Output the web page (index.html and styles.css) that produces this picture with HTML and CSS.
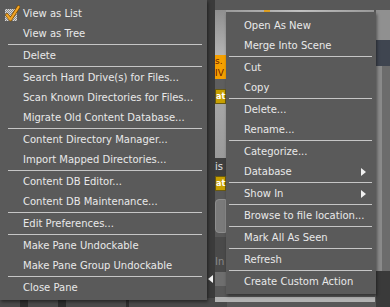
FILE: index.html
```html
<!DOCTYPE html>
<html lang="en">
<head>
  <meta charset="UTF-8" />
  <title>Content Library Menus</title>
  <link rel="stylesheet" href="styles.css">
</head>
<body>
  <div class="screen">
    <!-- background panes behind the popups -->
    <div class="bg-divider"></div>
    <div class="bg-column">
      <div class="col-light"></div>
      <div class="col-orange"><span>s.</span><span>IV</span></div>
      <div class="col-dark"></div>
      <div class="col-badge">at</div>
      <div class="col-grey"></div>
      <div class="col-label">is</div>
      <div class="col-badge">at</div>
      <div class="col-knob"></div>
      <div class="col-lower">In</div>
      <div class="col-grey2"></div>
    </div>
    <div class="bg-topstrip"><span class="dot"></span></div>
    <div class="bg-right">
      <div class="r-top"></div>
      <div class="r-blue"></div>
      <div class="r-mid"></div>
      <div class="r-dark"></div>
    </div>
    <div class="bg-bottom-left">
      <span class="bar"></span><span class="bar"></span><span class="bar thin"></span>
    </div>
    <div class="bg-bottom-right"></div>
    <span class="pane-arrow"></span>

    <ul class="menu menu-left">
      <li class="item checked">
        <svg class="check" width="16" height="18" viewBox="0 0 16 18">
          <defs>
            <pattern id="hatch" width="2" height="2" patternUnits="userSpaceOnUse">
              <rect width="2" height="2" fill="#8a8a8a"/>
              <rect width="1" height="1" fill="#d8d8d8"/>
              <rect x="1" y="1" width="1" height="1" fill="#d8d8d8"/>
            </pattern>
          </defs>
          <rect x="1" y="4" width="12" height="12" fill="url(#hatch)"/>
          <path d="M3 10 L6.5 14.5 L14.5 2" fill="none" stroke="#7a4a00" stroke-width="3.6" stroke-linecap="round" stroke-linejoin="round"/>
          <path d="M3 10 L6.5 14.5 L14.5 2" fill="none" stroke="#f2a526" stroke-width="2.2" stroke-linecap="round" stroke-linejoin="round"/>
        </svg>
        View as List
      </li>
      <li class="item">View as Tree</li>
      <li class="sep"></li>
      <li class="item">Delete</li>
      <li class="sep"></li>
      <li class="item">Search Hard Drive(s) for Files...</li>
      <li class="item">Scan Known Directories for Files...</li>
      <li class="item">Migrate Old Content Database...</li>
      <li class="sep"></li>
      <li class="item">Content Directory Manager...</li>
      <li class="item">Import Mapped Directories...</li>
      <li class="sep"></li>
      <li class="item">Content DB Editor...</li>
      <li class="item">Content DB Maintenance...</li>
      <li class="sep"></li>
      <li class="item">Edit Preferences...</li>
      <li class="sep"></li>
      <li class="item">Make Pane Undockable</li>
      <li class="item">Make Pane Group Undockable</li>
      <li class="sep"></li>
      <li class="item">Close Pane</li>
    </ul>

    <ul class="menu menu-right">
      <li class="item">Open As New</li>
      <li class="item">Merge Into Scene</li>
      <li class="sep"></li>
      <li class="item">Cut</li>
      <li class="item">Copy</li>
      <li class="sep"></li>
      <li class="item">Delete...</li>
      <li class="item">Rename...</li>
      <li class="sep"></li>
      <li class="item">Categorize...</li>
      <li class="item sub">Database</li>
      <li class="sep"></li>
      <li class="item sub">Show In</li>
      <li class="sep"></li>
      <li class="item">Browse to file location...</li>
      <li class="sep"></li>
      <li class="item">Mark All As Seen</li>
      <li class="sep"></li>
      <li class="item">Refresh</li>
      <li class="sep"></li>
      <li class="item">Create Custom Action</li>
    </ul>
  </div>
</body>
</html>
```

FILE: styles.css
```css
body {
  margin: 0;
  padding: 0;
  background-color: #4f4f4f;
  font-family: 'DejaVu Sans', sans-serif;
}
.screen {
  position: relative;
  width: 390px;
  height: 307px;
  overflow: hidden;
  background-color: #585858;
}

/* background panes */
.bg-divider {
  position: absolute;
  left: 207px;
  top: 0;
  width: 8px;
  height: 307px;
  background-color: #3b3b3b;
}
.bg-column {
  position: absolute;
  left: 215px;
  top: 10px;
  width: 11px;
  height: 297px;
  display: flex;
  flex-direction: column;
  font-size: 9px;
  overflow: hidden;
}
.col-light {
  height: 45px;
  background: linear-gradient(#8f8f8f, #b4b4b4);
}
.col-orange {
  height: 24px;
  background-color: #f5a000;
  color: #6a1a00;
  display: flex;
  flex-direction: column;
  line-height: 12px;
  font-size: 9px;
}
.col-dark {
  height: 10px;
  background-color: #5e5e5e;
}
.col-badge {
  height: 15px;
  background-color: #c8a000;
  border: 1px solid #6a5a10;
  box-sizing: border-box;
  color: #fff;
  font-weight: bold;
  line-height: 13px;
  font-size: 8px;
}
.col-grey {
  height: 54px;
  background: linear-gradient(#a6a6a6, #9a9a9a);
}
.col-label {
  height: 18px;
  background-color: #3f3f3f;
  color: #e0e0e0;
  line-height: 18px;
  font-size: 10px;
}
.col-knob {
  height: 32px;
  margin-top: 8px;
  background-color: #7a7a7a;
  border-radius: 4px 0 0 4px;
  border: 1px solid #8e8e8e;
}
.col-lower {
  height: 35px;
  margin-top: 4px;
  background-color: #4a4a4a;
  color: #8a8a8a;
  font-size: 10px;
  line-height: 50px;
}
.col-grey2 {
  height: 14px;
  background-color: #6e6e6e;
}
.bg-topstrip {
  position: absolute;
  left: 226px;
  top: 10px;
  width: 148px;
  height: 3px;
  background: linear-gradient(90deg, #9c9c9c, #c4c4c4 50%, #9a9a9a);
}
.bg-topstrip .dot {
  position: absolute;
  left: 38px;
  top: 0;
  width: 6px;
  height: 3px;
  background-color: #e0a020;
}
.bg-right {
  position: absolute;
  left: 376px;
  top: 10px;
  width: 14px;
  height: 297px;
  display: flex;
  flex-direction: column;
  background-color: #6a6a6a;
}
.r-top {
  height: 30px;
  background-color: #909090;
}
.r-blue {
  height: 26px;
  background-color: #3f4550;
}
.r-mid {
  height: 205px;
  background: linear-gradient(90deg, #8a8a8a 40%, #6c6c6c 40%);
}
.r-dark {
  flex: 1;
  background-color: #3a3a3a;
}
.bg-bottom-left {
  position: absolute;
  left: 0;
  top: 298px;
  width: 207px;
  height: 9px;
  background-color: #4a4a4a;
  display: flex;
  gap: 30px;
  padding-left: 20px;
}
.bg-bottom-left .bar {
  width: 8px;
  height: 9px;
  background-color: #2e2e2e;
}
.bg-bottom-left .bar.thin {
  width: 3px;
  margin-left: 30px;
}
.bg-bottom-right {
  position: absolute;
  left: 215px;
  top: 297px;
  width: 160px;
  height: 5px;
  background-color: #b2b2b2;
}
.pane-arrow {
  position: absolute;
  left: 208px;
  top: 275px;
  width: 0;
  height: 0;
  border-top: 4px solid transparent;
  border-bottom: 4px solid transparent;
  border-right: 5px solid #f4f4f4;
}

/* popup menus */
.menu {
  position: absolute;
  margin: 0;
  list-style: none;
  background-color: #5a5a5a;
  color: #e9e9e9;
  font-size: 10px;
  box-shadow: 1px 2px 3px rgba(0, 0, 0, 0.45);
}
.menu-left {
  left: 0;
  top: 0;
  width: 207px;
  padding: 4px 0 2px;
}
.menu-right {
  left: 226px;
  top: 12px;
  width: 150px;
  padding: 4px 0 2px;
}
.item {
  position: relative;
  height: 20px;
  line-height: 20px;
  white-space: nowrap;
}
.menu-left .item {
  padding-left: 23px;
}
.menu-right .item {
  padding-left: 18px;
}
.sep {
  height: 1px;
  border-top: 1px solid #c6c6c6;
}
.menu-left .sep {
  margin: 0 5px 0 8px;
}
.menu-right .sep {
  margin: 0 4px 0 3px;
}
.item.sub::after {
  content: "";
  position: absolute;
  right: 10px;
  top: 6px;
  border-top: 4px solid transparent;
  border-bottom: 4px solid transparent;
  border-left: 5px solid #f0f0f0;
}
.check {
  position: absolute;
  left: 4px;
  top: 1px;
}
```
